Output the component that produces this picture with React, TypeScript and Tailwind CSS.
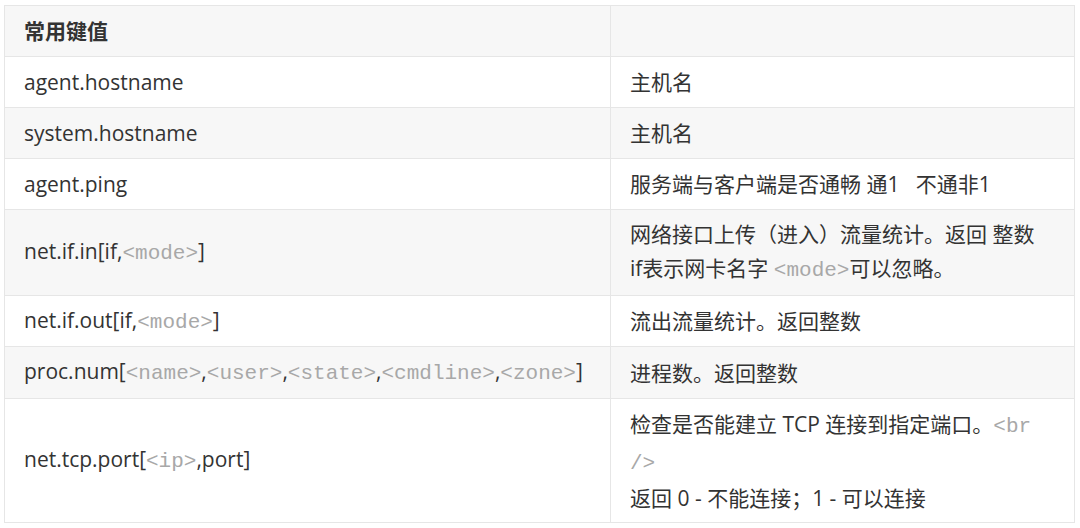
import React from 'react';

const Code = ({ children }: { children: React.ReactNode }) => (
  <span className="text-[#a8a8a8] font-['Liberation_Mono',monospace] text-[21px]">{children}</span>
);

const rows: { key: React.ReactNode; value: React.ReactNode; h: string }[] = [
  { key: 'agent.hostname', value: '主机名', h: 'h-[51px]' },
  { key: 'system.hostname', value: '主机名', h: 'h-[51px]' },
  { key: 'agent.ping', value: '服务端与客户端是否通畅 通1   不通非1', h: 'h-[51px]' },
  {
    key: <>net.if.in[if,<Code>&lt;mode&gt;</Code>]</>,
    value: (
      <>
        网络接口上传（进入）流量统计。返回 整数
        <br />
        if表示网卡名字 <Code>&lt;mode&gt;</Code>可以忽略。
      </>
    ),
    h: 'h-[86px]',
  },
  { key: <>net.if.out[if,<Code>&lt;mode&gt;</Code>]</>, value: '流出流量统计。返回整数', h: 'h-[51px]' },
  {
    key: (
      <>
        proc.num[<Code>&lt;name&gt;</Code>,<Code>&lt;user&gt;</Code>,<Code>&lt;state&gt;</Code>,<Code>&lt;cmdline&gt;</Code>,<Code>&lt;zone&gt;</Code>]
      </>
    ),
    value: '进程数。返回整数',
    h: 'h-[52px]',
  },
  {
    key: <>net.tcp.port[<Code>&lt;ip&gt;</Code>,port]</>,
    value: (
      <>
        检查是否能建立 TCP 连接到指定端口。<Code>&lt;br</Code>
        <br />
        <Code>/&gt;</Code>
        <br />
        返回 0 - 不能连接；1 - 可以连接
      </>
    ),
    h: 'h-[124px]',
  },
];

export default function App() {
  return (
    <div className="w-[1080px] h-[528px] bg-white pt-[5px] pl-[4px] font-['Open_Sans','Noto_Sans_CJK_SC',sans-serif] text-[21px] leading-[34px] text-[#333333]">
      <table className="w-[1071px] border-collapse table-fixed">
        <colgroup>
          <col className="w-[606px]" />
          <col />
        </colgroup>
        <thead>
          <tr className="h-[51px] bg-[#f7f7f7]">
            <th className="border border-[#e6e6e6] px-[19px] text-left font-semibold align-middle">常用键值</th>
            <th className="border border-[#e6e6e6] px-[19px]"></th>
          </tr>
        </thead>
        <tbody>
          {rows.map((r, i) => (
            <tr key={i} className={`${r.h} ${i % 2 === 1 ? 'bg-[#f7f7f7]' : 'bg-white'}`}>
              <td className="border border-[#e6e6e6] px-[19px] align-middle whitespace-nowrap">{r.key}</td>
              <td className="border border-[#e6e6e6] px-[19px] align-middle whitespace-pre-wrap">{r.value}</td>
            </tr>
          ))}
        </tbody>
      </table>
    </div>
  );
}
